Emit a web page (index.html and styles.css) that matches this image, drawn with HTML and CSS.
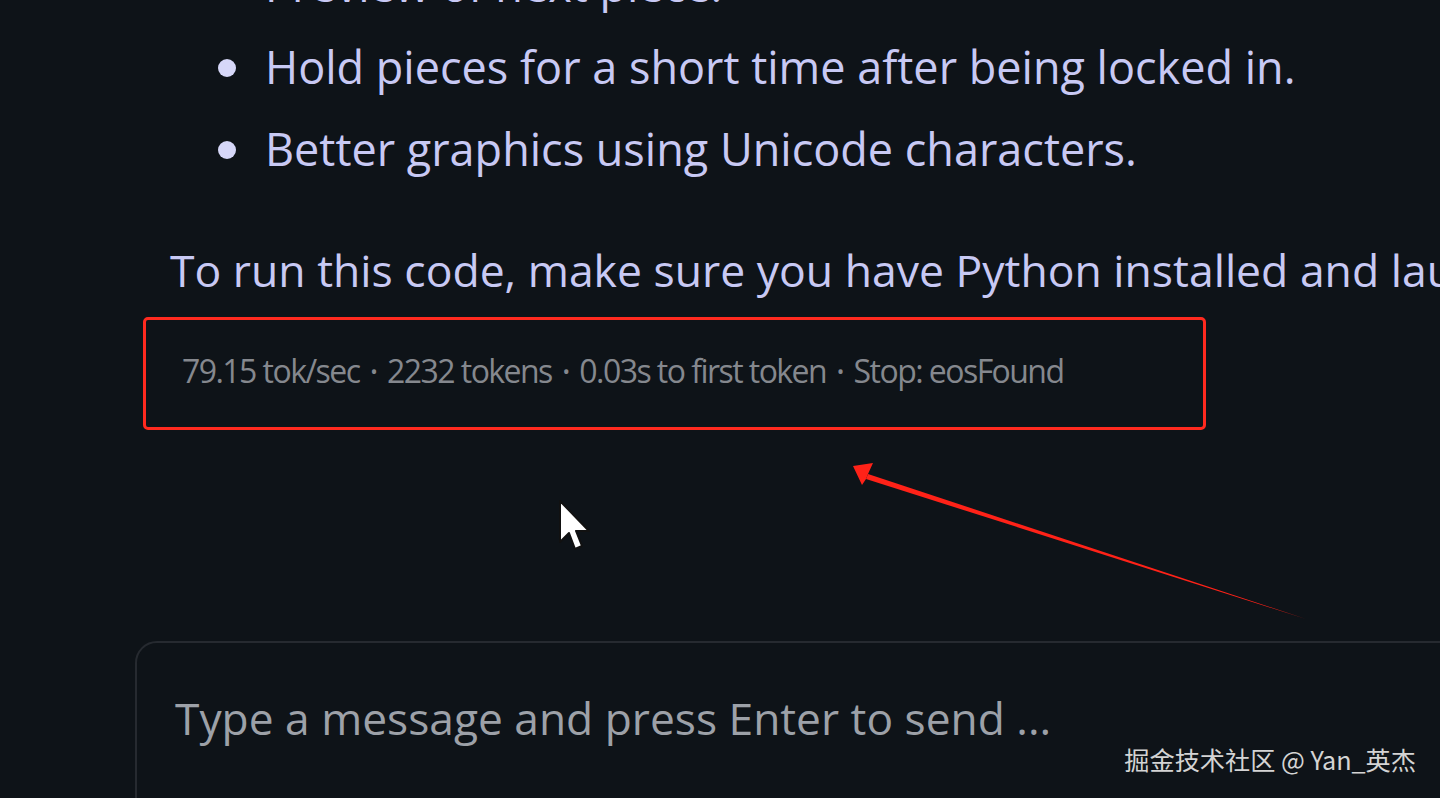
FILE: index.html
```html
<!DOCTYPE html>
<html lang="en">
<head>
<meta charset="utf-8">
<title>Chat</title>
<link rel="stylesheet" href="styles.css">
</head>
<body>
<div class="page">
  <div class="message">
    <ul class="features">
      <li>Preview of next piece.</li>
      <li>Hold pieces for a short time after being locked in.</li>
      <li>Better graphics using Unicode characters.</li>
    </ul>
    <p class="para">To run this code, make sure you have Python installed and launch it from a terminal.</p>
    <div class="stats-box">
      <span class="stats">79.15 tok/sec <span class="dot">•</span> 2232 tokens <span class="dot">•</span> 0.03s to first token <span class="dot">•</span> Stop: eosFound</span>
    </div>
  </div>
  <div class="composer">
    <div class="placeholder">Type a message and press Enter to send ...</div>
  </div>

  <svg class="arrow" width="1440" height="798" viewBox="0 0 1440 798">
    <path d="M1306 619 L868 474 L866 479 Z" fill="#ff2218"/>
    <path d="M853 466 L873 463 L868 474 L866 479 L862 485 Z" fill="#ff2218"/>
  </svg>
  <svg class="cursor" width="40" height="60" viewBox="0 0 40 60">
    <path d="M2 2 L2 43 L11 34 L17 50 L24 47 L18 32 L31 32 Z" fill="#ffffff" stroke="#111" stroke-width="2" stroke-linejoin="round"/>
  </svg>
  <div class="watermark">掘金技术社区 @ Yan_英杰</div>
</div>
</body>
</html>
```

FILE: styles.css
```css
html, body {
  margin: 0;
  padding: 0;
  background: #0e1318;
}
.page {
  position: relative;
  width: 1440px;
  height: 798px;
  overflow: hidden;
  background: #0e1318;
  font-family: "Open Sans", "Noto Sans", sans-serif;
}
.message {
  padding-left: 170px;
  margin-top: -56px;
}
.features {
  margin: 0;
  padding-left: 95px;
  list-style: none;
}
.features li {
  position: relative;
  font-size: 45px;
  line-height: 82px;
  color: #c8c9f4;
  white-space: nowrap;
}
.features li::before {
  content: "";
  position: absolute;
  left: -47px;
  top: 33px;
  width: 18px;
  height: 18px;
  border-radius: 50%;
  background: #d6d7f8;
}
.para {
  margin: 50px 0 0 0;
  font-size: 44.5px;
  line-height: 60px;
  color: #c8c9f4;
  white-space: nowrap;
}
.stats-box {
  margin-top: 17px;
  margin-left: -27px;
  width: 1021px;
  height: 101px;
  border: 3px solid #ff2a1f;
  border-radius: 5px;
  display: flex;
  align-items: center;
  padding-left: 36px;
  padding-bottom: 6px;
  box-sizing: content-box;
}
.stats {
  font-size: 32px;
  color: #85888e;
  white-space: nowrap;
  letter-spacing: -1.55px;
}
.dot {
  font-size: 20px;
  padding: 0 4px;
  vertical-align: 4px;
}
.composer {
  position: absolute;
  left: 135px;
  top: 641px;
  width: 1400px;
  height: 300px;
  border: 2px solid #262a30;
  border-radius: 22px;
  padding: 45px 0 0 38px;
  box-sizing: border-box;
}
.placeholder {
  font-size: 44.3px;
  color: #9da1a8;
  white-space: nowrap;
}
.arrow {
  position: absolute;
  left: 0;
  top: 0;
}
.cursor {
  position: absolute;
  left: 558px;
  top: 499px;
}
.watermark {
  position: absolute;
  right: 24px;
  top: 741px;
  font-family: "Noto Sans CJK SC", "Noto Sans", sans-serif;
  font-size: 25.2px;
  color: #d4d4d4;
}
```
